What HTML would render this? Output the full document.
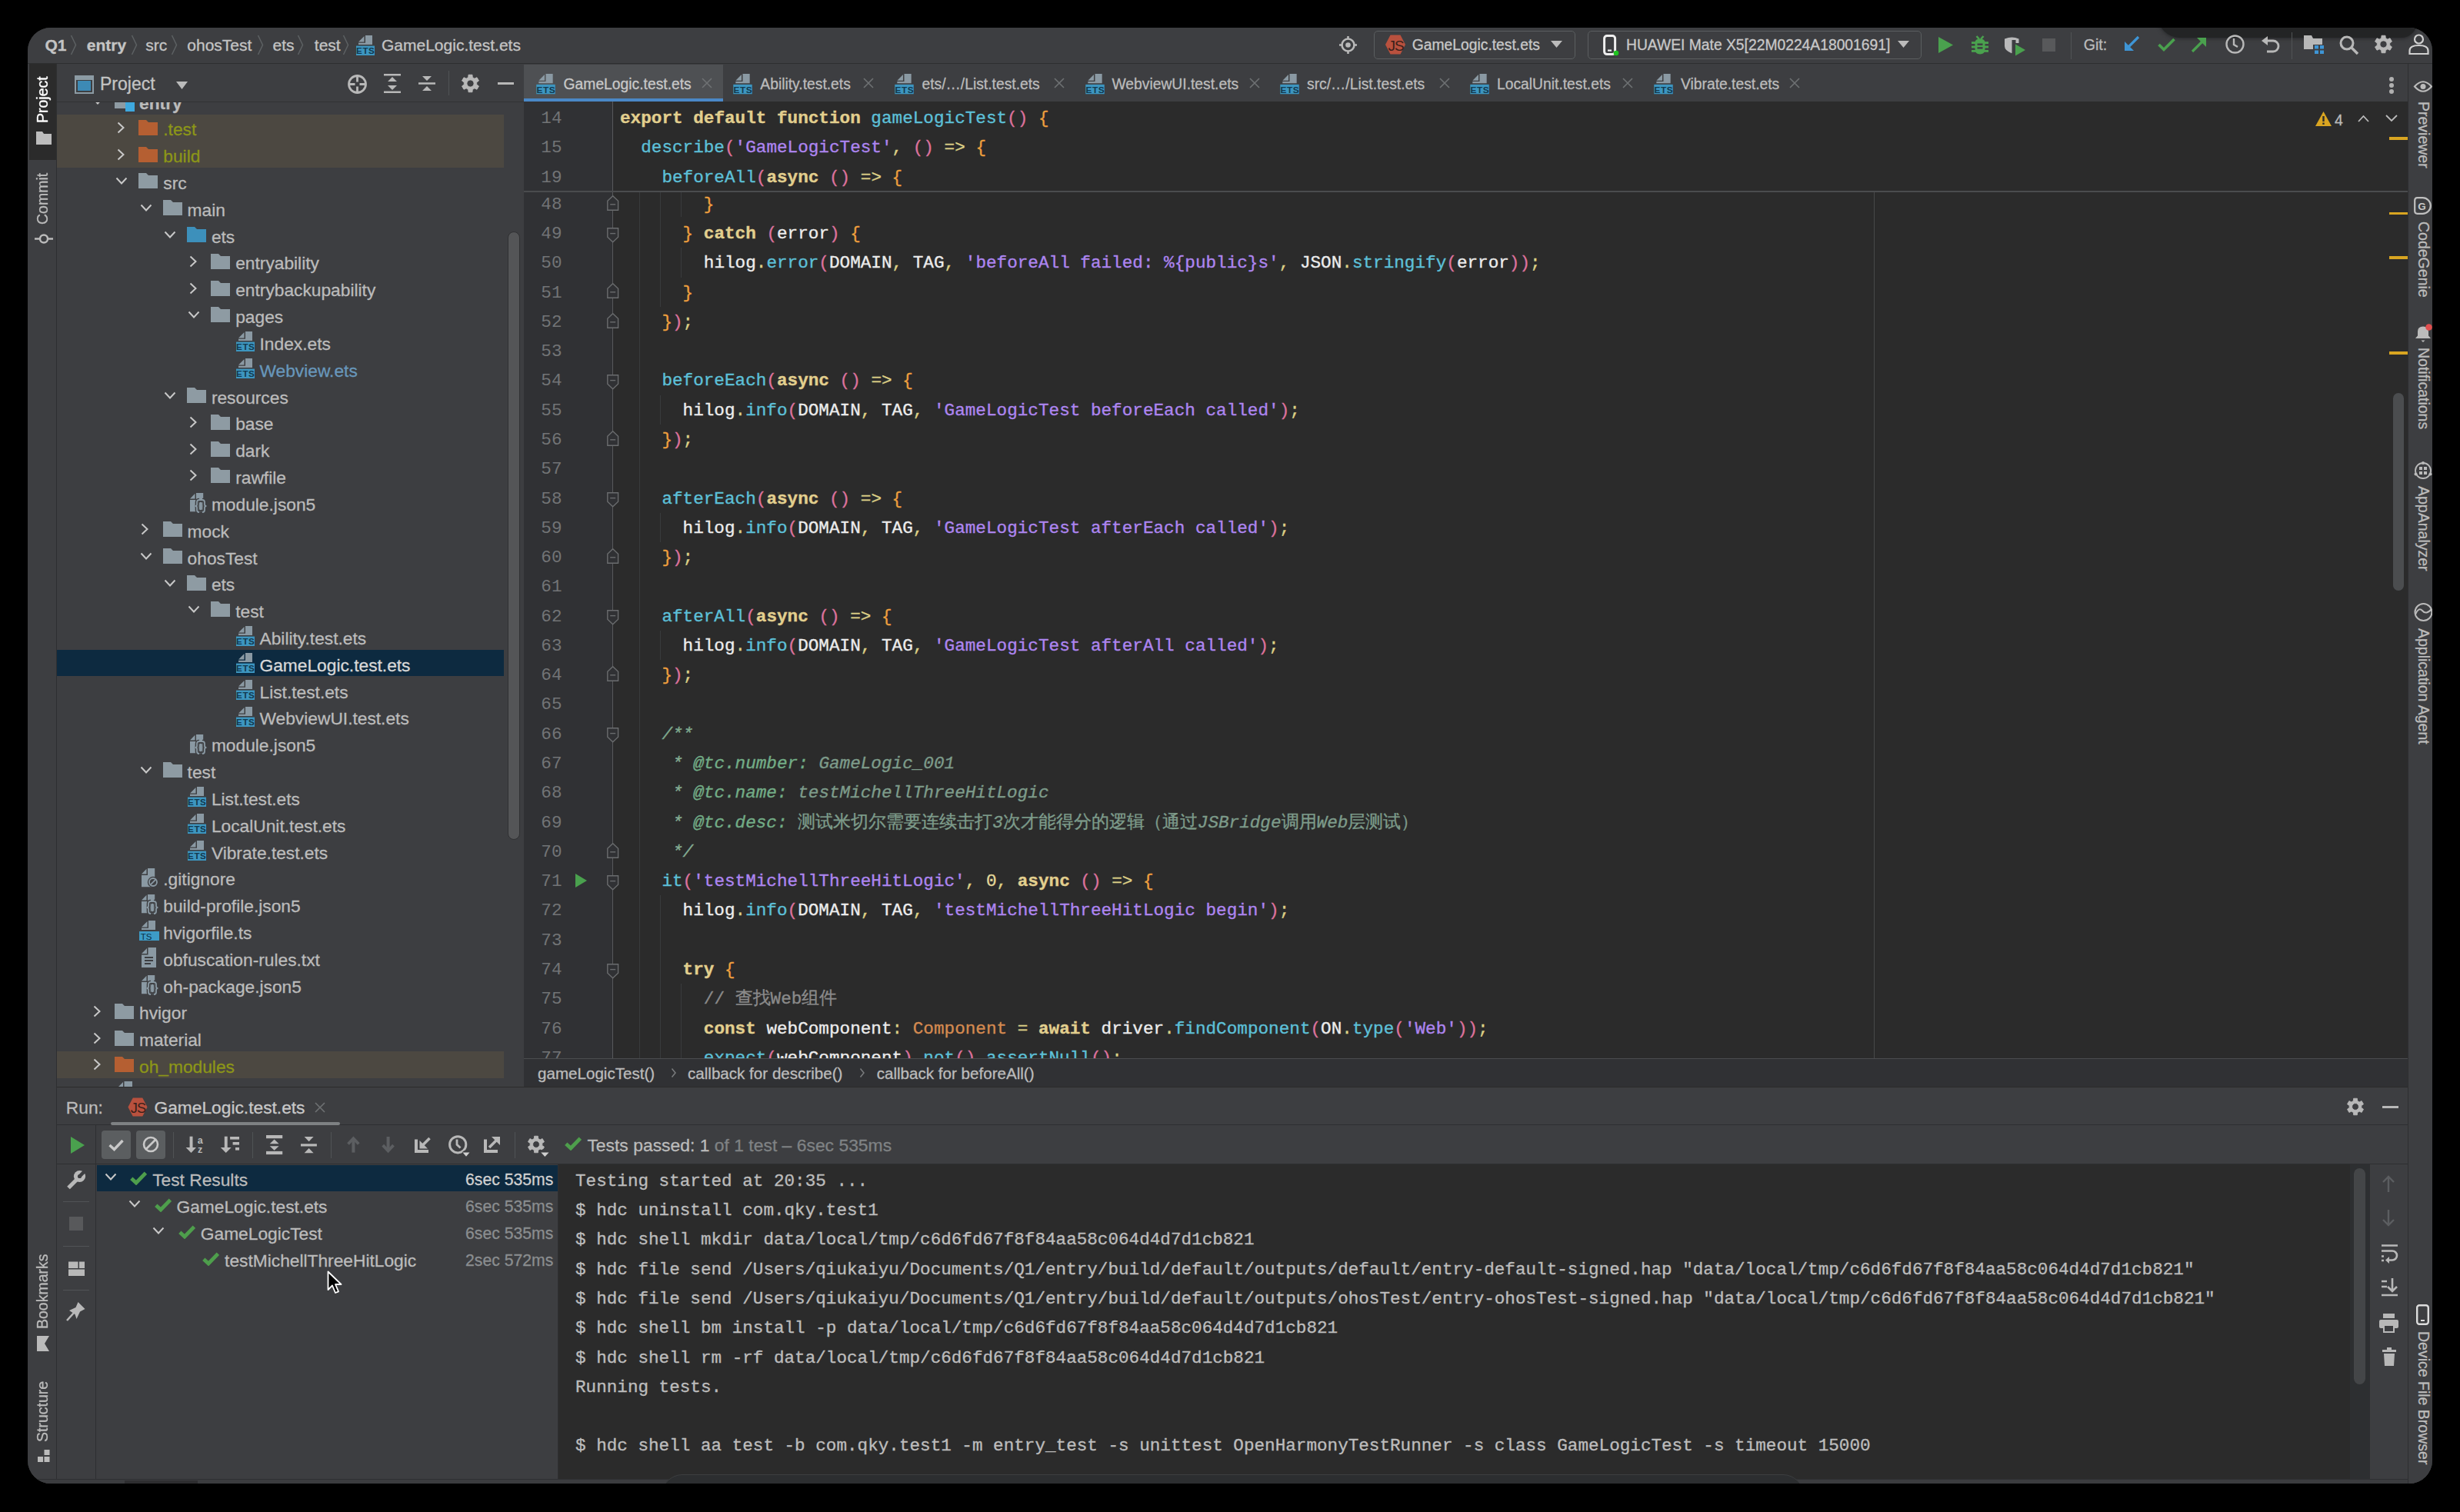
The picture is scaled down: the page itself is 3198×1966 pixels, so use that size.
<!DOCTYPE html><html><head><meta charset="utf-8"><style>
*{margin:0;padding:0;box-sizing:border-box}
html,body{width:3198px;height:1966px;background:#000;overflow:hidden}
#win{position:absolute;left:0;top:0;width:3198px;height:1966px;clip-path:inset(36px 36px 37px 36px round 30px);background:#3d3e41}
.a{position:absolute}
.t{position:absolute;white-space:pre;font-family:"Liberation Sans", sans-serif;color:#bbbbbb;-webkit-text-stroke:0.3px currentColor}
.m{position:absolute;white-space:pre;font-family:"Liberation Mono", monospace;font-size:22.667px;-webkit-text-stroke:0.35px currentColor}
.k{color:#e2cf8e;font-weight:bold}
.f{color:#5dc0d8}
.s{color:#ad85f0}
.p{color:#dc729c}
.b{color:#ee9f3e}
.i{color:#ececec}
.o{color:#dccf86}
.n{color:#e3d89a}
.ty{color:#d48a50}
.c{color:#8a8a8a}
.dk{color:#7fa98e;font-style:italic}
.ds{color:#84ac93;font-style:italic}
.dt{color:#72ac86;font-style:italic}
.dx{color:#7d9b8a;font-style:italic}
.dxc{color:#7d9b8a}
svg{position:absolute;overflow:visible}
</style></head><body><div id="win">
<svg width="0" height="0" style="position:absolute"><defs>
<symbol id="folder" viewBox="0 0 25 20"><path d="M0 0H10L13 3H25V20H0Z" fill="currentColor"/></symbol>
<symbol id="ets" viewBox="0 0 24 26"><path d="M3 8.6L10.5 1V8.6Z M12 0H21V12H3V9.8H12Z" fill="#8a99a3"/><rect x="0" y="13.6" width="24" height="12.4" fill="#3d96c0"/><text x="12.3" y="24.4" font-family="Liberation Sans" font-weight="bold" font-size="11.6" fill="#12394f" text-anchor="middle" letter-spacing="0.6">ETS</text></symbol>
<symbol id="json" viewBox="0 0 24 27"><path d="M1 8.5L7.5 1.8V8.5Z M9 1H18.2V25.2H1V10H9Z" fill="#8a99a3"/><path d="M13 10Q10 10 10 13V16Q10 18 7.6 18Q10 18 10 20V23Q10 26 13 26 M17 10Q20 10 20 13V16Q20 18 22.4 18Q20 18 20 20V23Q20 26 17 26" fill="none" stroke="#3d3e41" stroke-width="4.6"/><path d="M12.5 11H17.5V25H12.5Z" fill="#3d3e41"/><path d="M13 10Q10 10 10 13V16Q10 18 7.6 18Q10 18 10 20V23Q10 26 13 26 M17 10Q20 10 20 13V16Q20 18 22.4 18Q20 18 20 20V23Q20 26 17 26" fill="none" stroke="#8a99a3" stroke-width="1.8"/><rect x="13.1" y="12.8" width="3.8" height="10.4" rx="1.6" fill="#8a99a3"/></symbol>
<symbol id="gi" viewBox="0 0 24 27"><path d="M1 8.5L7.5 1.8V8.5Z M9 1H18.2V25.2H1V10H9Z" fill="#8a99a3"/><circle cx="16" cy="19" r="7.2" fill="#3d3e41"/><circle cx="16" cy="19" r="5" fill="none" stroke="#8a99a3" stroke-width="1.8"/><path d="M12.6 22.4L19.4 15.6" stroke="#8a99a3" stroke-width="1.8"/></symbol>
<symbol id="tsf" viewBox="0 0 26 26"><path d="M3 8.6L10.5 1V8.6Z M12 0H21V12H3V9.8H12Z" fill="#8a99a3"/><rect x="0" y="14" width="26" height="12" fill="#3d9bc6"/><text x="9" y="24.6" font-family="Liberation Sans" font-size="11.5" fill="#0b3148" text-anchor="middle">TS</text></symbol>
<symbol id="txt" viewBox="0 0 20 26"><path d="M0 8L7 1V8Z M8.5 0H19V26H0V9.5H8.5Z" fill="#8a99a3"/><path d="M4 13H15M4 17H15M4 21H12" stroke="#3d3e41" stroke-width="1.8"/></symbol>
<symbol id="chev" viewBox="0 0 10 16"><path d="M1.5 1.5L8.5 8L1.5 14.5" fill="none" stroke="#c8c8c8" stroke-width="2"/></symbol>
<symbol id="chevd" viewBox="0 0 16 10"><path d="M1.5 1.5L8 8.5L14.5 1.5" fill="none" stroke="#c8c8c8" stroke-width="2"/></symbol>
<symbol id="check" viewBox="0 0 22 18"><path d="M1.8 9.2L8 15L20.4 2.2" fill="none" stroke="#4e9e4c" stroke-width="4.8"/></symbol>
<symbol id="jsic" viewBox="0 0 28 28"><path d="M7.5 1.5H20.5L27 14L20.5 26.5H7.5L1 14Z" fill="#b9513e"/><text x="14.5" y="21.5" font-family="Liberation Sans" font-size="19" fill="#3a1f1a" text-anchor="middle" letter-spacing="-1">JS</text></symbol>
</defs></svg>
<div class="a" style="left:36px;top:36px;width:3126px;height:46px;background:#3d3e41;"></div>
<div class="a" style="left:36px;top:82px;width:3126px;height:1px;background:#2d2e30;"></div>
<div class="a" style="left:2805px;top:20px;width:337px;height:28.5px;background:#232425;border-radius:0 0 28px 40px;box-shadow:0 1px 5px #262729"></div>
<div class="t" style="left:58.50px;top:46.32px;font-size:21px;line-height:25.20px;color:#c4c4c4;font-weight:bold;">Q1</div>
<div class="t" style="left:112.80px;top:46.32px;font-size:21px;line-height:25.20px;color:#c4c4c4;font-weight:bold;">entry</div>
<div class="t" style="left:189.30px;top:46.32px;font-size:21px;line-height:25.20px;color:#c4c4c4;font-weight:normal;">src</div>
<div class="t" style="left:243.30px;top:46.32px;font-size:21px;line-height:25.20px;color:#c4c4c4;font-weight:normal;">ohosTest</div>
<div class="t" style="left:354.50px;top:46.32px;font-size:21px;line-height:25.20px;color:#c4c4c4;font-weight:normal;">ets</div>
<div class="t" style="left:408.80px;top:46.32px;font-size:21px;line-height:25.20px;color:#c4c4c4;font-weight:normal;">test</div>
<svg style="left:90.5px;top:45px" width="10" height="28"><path d="M1.5 1L7.5 13.5L1.5 26" fill="none" stroke="#5d6163" stroke-width="1.5"/></svg>
<svg style="left:170px;top:45px" width="10" height="28"><path d="M1.5 1L7.5 13.5L1.5 26" fill="none" stroke="#5d6163" stroke-width="1.5"/></svg>
<svg style="left:222px;top:45px" width="10" height="28"><path d="M1.5 1L7.5 13.5L1.5 26" fill="none" stroke="#5d6163" stroke-width="1.5"/></svg>
<svg style="left:334px;top:45px" width="10" height="28"><path d="M1.5 1L7.5 13.5L1.5 26" fill="none" stroke="#5d6163" stroke-width="1.5"/></svg>
<svg style="left:386px;top:45px" width="10" height="28"><path d="M1.5 1L7.5 13.5L1.5 26" fill="none" stroke="#5d6163" stroke-width="1.5"/></svg>
<svg style="left:445px;top:45px" width="10" height="28"><path d="M1.5 1L7.5 13.5L1.5 26" fill="none" stroke="#5d6163" stroke-width="1.5"/></svg>
<svg style="left:463.40px;top:45.50px;" width="24" height="26"><use href="#ets" width="24" height="26"/></svg>
<div class="t" style="left:496.00px;top:46.32px;font-size:21px;line-height:25.20px;color:#c4c4c4;font-weight:normal;">GameLogic.test.ets</div>
<div class="a" style="left:36px;top:83px;width:37px;height:1846px;background:#3d3e41;"></div>
<div class="a" style="left:73px;top:83px;width:1px;height:1846px;background:#2e2f31;"></div>
<div class="a" style="left:38px;top:83px;width:35px;height:125px;background:#2b2b2b;"></div>
<div class="t" style="left:44.30px;top:99px;width:23.40px;height:62px;font-size:19.5px;line-height:23.40px;writing-mode:vertical-rl;transform:rotate(180deg);text-align:center;color:#ffffff">Project</div>
<svg style="left:46.5px;top:170.8px" width="20" height="17"><path d="M0 0H8L10 3H20V17H0Z" fill="#bdbdbd"/></svg>
<div class="t" style="left:44.30px;top:224px;width:23.40px;height:69px;font-size:19.5px;line-height:23.40px;writing-mode:vertical-rl;transform:rotate(180deg);text-align:center;color:#bbbbbb">Commit</div>
<svg style="left:45px;top:302px" width="24" height="17"><circle cx="12" cy="8.5" r="5" fill="none" stroke="#bbbbbb" stroke-width="2.4"/><path d="M0 8.5H7M17 8.5H24" stroke="#bbbbbb" stroke-width="2.4"/></svg>
<div class="t" style="left:44.30px;top:1631px;width:23.40px;height:97px;font-size:19.5px;line-height:23.40px;writing-mode:vertical-rl;transform:rotate(180deg);text-align:center;color:#bbbbbb">Bookmarks</div>
<svg style="left:48px;top:1737px" width="16" height="20"><path d="M0 0H16L10 10L16 20H0Z" fill="#bbbbbb"/></svg>
<div class="t" style="left:44.30px;top:1794px;width:23.40px;height:82px;font-size:19.5px;line-height:23.40px;writing-mode:vertical-rl;transform:rotate(180deg);text-align:center;color:#bbbbbb">Structure</div>
<svg style="left:48.7px;top:1884.8px" width="16" height="16"><rect x="0" y="9" width="7" height="7" fill="#bbbbbb"/><rect x="8.5" y="9" width="7" height="7" fill="#bbbbbb"/><rect x="8.5" y="0" width="7" height="7" fill="#bbbbbb"/></svg>
<div class="a" style="left:74px;top:83px;width:607px;height:49px;background:#3d3e41;"></div>
<div class="a" style="left:74px;top:132px;width:607px;height:1px;background:#313234;"></div>
<svg style="left:97px;top:97.6px" width="25" height="24"><rect x="1" y="1" width="23" height="22" fill="none" stroke="#8c9ba4" stroke-width="2"/><rect x="1" y="1" width="23" height="5" fill="#8c9ba4"/><rect x="4" y="7" width="17" height="13" fill="#3d8ab5"/></svg>
<div class="t" style="left:130.00px;top:96.23px;font-size:23px;line-height:27.60px;color:#c4c4c4;font-weight:normal;">Project</div>
<svg style="left:229px;top:105.5px" width="15" height="10"><path d="M0 0H15L7.5 10Z" fill="#bbbbbb"/></svg>
<svg style="left:452px;top:96.5px" width="25" height="25"><circle cx="12.5" cy="12.5" r="11" fill="none" stroke="#b8b8b8" stroke-width="2.8"/><path d="M12.5 2V9.5M12.5 15.5V23M2 12.5H9.5M15.5 12.5H23" stroke="#b8b8b8" stroke-width="2.8"/></svg>
<svg style="left:498.5px;top:96px" width="22" height="25"><path d="M0 1.2H22M0 23.8H22" stroke="#b8b8b8" stroke-width="2.4"/><path d="M5 10L11 4L17 10Z M5 15L11 21L17 15Z" fill="#b8b8b8"/></svg>
<svg style="left:544px;top:96px" width="22" height="25"><path d="M0 12.5H22" stroke="#b8b8b8" stroke-width="2.4"/><path d="M5 3L11 9L17 3Z M5 22L11 16L17 22Z" fill="#b8b8b8"/></svg>
<div class="a" style="left:583px;top:92px;width:1px;height:32px;background:#505355;"></div>
<svg style="left:600px;top:97px" width="23" height="23" viewBox="0 0 24 24"><path d="M9.12 3.90L9.43 0.28L14.57 0.28L14.88 3.90L15.61 4.19L16.30 4.55L16.96 4.97L17.57 5.45L20.86 3.91L23.44 8.37L20.46 10.45L20.56 11.22L20.60 12.00L20.56 12.78L20.46 13.55L23.44 15.63L20.86 20.09L17.57 18.55L16.96 19.03L16.30 19.45L15.61 19.81L14.88 20.10L14.57 23.72L9.43 23.72L9.12 20.10L8.39 19.81L7.70 19.45L7.04 19.03L6.43 18.55L3.14 20.09L0.56 15.63L3.54 13.55L3.44 12.78L3.40 12.00L3.44 11.22L3.54 10.45L0.56 8.37L3.14 3.91L6.43 5.45L7.04 4.97L7.70 4.55L8.39 4.19Z M12 7.20A4.8 4.8 0 1 0 12 16.80A4.8 4.8 0 1 0 12 7.20Z" fill="#b8b8b8" fill-rule="evenodd" stroke="#b8b8b8" stroke-width="1" stroke-linejoin="round"/></svg>
<div class="a" style="left:647px;top:107px;width:21px;height:3px;background:#b8b8b8;"></div>
<div class="a" style="left:74px;top:133px;width:607px;height:1281px;overflow:hidden">
<svg style="left:45.00px;top:-7.11px;" width="16" height="10"><use href="#chevd" width="16" height="10"/></svg>
<svg style="left:75.00px;top:-12.11px;color:#8e9ba3;" width="25" height="20"><use href="#folder" width="25" height="20"/></svg>
<div class="a" style="left:89.0px;top:-0.11000000000001364px;width:12px;height:12px;background:#3ea8de;"></div>
<div class="t" style="left:107.00px;top:-12.44px;font-size:22.75px;line-height:27.30px;color:#bbbbbb;font-weight:bold;">entry</div>
<div class="a" style="left:0px;top:15.599999999999984px;width:581px;height:34.22px;background:#4c4841;"></div>
<svg style="left:78.00px;top:24.71px;" width="10" height="16"><use href="#chev" width="10" height="16"/></svg>
<svg style="left:106.30px;top:22.71px;color:#b55f32;" width="25" height="20"><use href="#folder" width="25" height="20"/></svg>
<div class="t" style="left:138.30px;top:22.38px;font-size:22.75px;line-height:27.30px;color:#8c9618;font-weight:normal;">.test</div>
<div class="a" style="left:0px;top:50.41999999999997px;width:581px;height:34.22px;background:#4c4841;"></div>
<svg style="left:78.00px;top:59.53px;" width="10" height="16"><use href="#chev" width="10" height="16"/></svg>
<svg style="left:106.30px;top:57.53px;color:#b55f32;" width="25" height="20"><use href="#folder" width="25" height="20"/></svg>
<div class="t" style="left:138.30px;top:57.20px;font-size:22.75px;line-height:27.30px;color:#8c9618;font-weight:normal;">build</div>
<svg style="left:76.30px;top:97.35px;" width="16" height="10"><use href="#chevd" width="16" height="10"/></svg>
<svg style="left:106.30px;top:92.35px;color:#8e9ba3;" width="25" height="20"><use href="#folder" width="25" height="20"/></svg>
<div class="t" style="left:138.30px;top:92.02px;font-size:22.75px;line-height:27.30px;color:#bbbbbb;font-weight:normal;">src</div>
<svg style="left:107.60px;top:132.17px;" width="16" height="10"><use href="#chevd" width="16" height="10"/></svg>
<svg style="left:137.60px;top:127.17px;color:#8e9ba3;" width="25" height="20"><use href="#folder" width="25" height="20"/></svg>
<div class="t" style="left:169.60px;top:126.84px;font-size:22.75px;line-height:27.30px;color:#bbbbbb;font-weight:normal;">main</div>
<svg style="left:138.90px;top:166.99px;" width="16" height="10"><use href="#chevd" width="16" height="10"/></svg>
<svg style="left:168.90px;top:161.99px;color:#3d90bb;" width="25" height="20"><use href="#folder" width="25" height="20"/></svg>
<div class="t" style="left:200.90px;top:161.66px;font-size:22.75px;line-height:27.30px;color:#bbbbbb;font-weight:normal;">ets</div>
<svg style="left:171.90px;top:198.81px;" width="10" height="16"><use href="#chev" width="10" height="16"/></svg>
<svg style="left:200.20px;top:196.81px;color:#8e9ba3;" width="25" height="20"><use href="#folder" width="25" height="20"/></svg>
<div class="t" style="left:232.20px;top:196.48px;font-size:22.75px;line-height:27.30px;color:#bbbbbb;font-weight:normal;">entryability</div>
<svg style="left:171.90px;top:233.63px;" width="10" height="16"><use href="#chev" width="10" height="16"/></svg>
<svg style="left:200.20px;top:231.63px;color:#8e9ba3;" width="25" height="20"><use href="#folder" width="25" height="20"/></svg>
<div class="t" style="left:232.20px;top:231.30px;font-size:22.75px;line-height:27.30px;color:#bbbbbb;font-weight:normal;">entrybackupability</div>
<svg style="left:170.20px;top:271.45px;" width="16" height="10"><use href="#chevd" width="16" height="10"/></svg>
<svg style="left:200.20px;top:266.45px;color:#8e9ba3;" width="25" height="20"><use href="#folder" width="25" height="20"/></svg>
<div class="t" style="left:232.20px;top:266.12px;font-size:22.75px;line-height:27.30px;color:#bbbbbb;font-weight:normal;">pages</div>
<svg style="left:232.50px;top:298.27px;" width="24" height="26"><use href="#ets" width="24" height="26"/></svg>
<div class="t" style="left:263.50px;top:300.94px;font-size:22.75px;line-height:27.30px;color:#bbbbbb;font-weight:normal;">Index.ets</div>
<svg style="left:232.50px;top:333.09px;" width="24" height="26"><use href="#ets" width="24" height="26"/></svg>
<div class="t" style="left:263.50px;top:335.76px;font-size:22.75px;line-height:27.30px;color:#6897bb;font-weight:normal;">Webview.ets</div>
<svg style="left:138.90px;top:375.91px;" width="16" height="10"><use href="#chevd" width="16" height="10"/></svg>
<svg style="left:168.90px;top:370.91px;color:#8e9ba3;" width="25" height="20"><use href="#folder" width="25" height="20"/></svg>
<div class="t" style="left:200.90px;top:370.58px;font-size:22.75px;line-height:27.30px;color:#bbbbbb;font-weight:normal;">resources</div>
<svg style="left:171.90px;top:407.73px;" width="10" height="16"><use href="#chev" width="10" height="16"/></svg>
<svg style="left:200.20px;top:405.73px;color:#8e9ba3;" width="25" height="20"><use href="#folder" width="25" height="20"/></svg>
<div class="t" style="left:232.20px;top:405.40px;font-size:22.75px;line-height:27.30px;color:#bbbbbb;font-weight:normal;">base</div>
<svg style="left:171.90px;top:442.55px;" width="10" height="16"><use href="#chev" width="10" height="16"/></svg>
<svg style="left:200.20px;top:440.55px;color:#8e9ba3;" width="25" height="20"><use href="#folder" width="25" height="20"/></svg>
<div class="t" style="left:232.20px;top:440.22px;font-size:22.75px;line-height:27.30px;color:#bbbbbb;font-weight:normal;">dark</div>
<svg style="left:171.90px;top:477.37px;" width="10" height="16"><use href="#chev" width="10" height="16"/></svg>
<svg style="left:200.20px;top:475.37px;color:#8e9ba3;" width="25" height="20"><use href="#folder" width="25" height="20"/></svg>
<div class="t" style="left:232.20px;top:475.04px;font-size:22.75px;line-height:27.30px;color:#bbbbbb;font-weight:normal;">rawfile</div>
<svg style="left:171.70px;top:507.19px;" width="24" height="27"><use href="#json" width="24" height="27"/></svg>
<div class="t" style="left:200.90px;top:509.86px;font-size:22.75px;line-height:27.30px;color:#bbbbbb;font-weight:normal;">module.json5</div>
<svg style="left:109.30px;top:547.01px;" width="10" height="16"><use href="#chev" width="10" height="16"/></svg>
<svg style="left:137.60px;top:545.01px;color:#8e9ba3;" width="25" height="20"><use href="#folder" width="25" height="20"/></svg>
<div class="t" style="left:169.60px;top:544.68px;font-size:22.75px;line-height:27.30px;color:#bbbbbb;font-weight:normal;">mock</div>
<svg style="left:107.60px;top:584.83px;" width="16" height="10"><use href="#chevd" width="16" height="10"/></svg>
<svg style="left:137.60px;top:579.83px;color:#8e9ba3;" width="25" height="20"><use href="#folder" width="25" height="20"/></svg>
<div class="t" style="left:169.60px;top:579.50px;font-size:22.75px;line-height:27.30px;color:#bbbbbb;font-weight:normal;">ohosTest</div>
<svg style="left:138.90px;top:619.65px;" width="16" height="10"><use href="#chevd" width="16" height="10"/></svg>
<svg style="left:168.90px;top:614.65px;color:#8e9ba3;" width="25" height="20"><use href="#folder" width="25" height="20"/></svg>
<div class="t" style="left:200.90px;top:614.32px;font-size:22.75px;line-height:27.30px;color:#bbbbbb;font-weight:normal;">ets</div>
<svg style="left:170.20px;top:654.47px;" width="16" height="10"><use href="#chevd" width="16" height="10"/></svg>
<svg style="left:200.20px;top:649.47px;color:#8e9ba3;" width="25" height="20"><use href="#folder" width="25" height="20"/></svg>
<div class="t" style="left:232.20px;top:649.14px;font-size:22.75px;line-height:27.30px;color:#bbbbbb;font-weight:normal;">test</div>
<svg style="left:232.50px;top:681.29px;" width="24" height="26"><use href="#ets" width="24" height="26"/></svg>
<div class="t" style="left:263.50px;top:683.96px;font-size:22.75px;line-height:27.30px;color:#bbbbbb;font-weight:normal;">Ability.test.ets</div>
<div class="a" style="left:0px;top:712.0px;width:581px;height:34.22px;background:#0d2a40;"></div>
<svg style="left:232.50px;top:716.11px;" width="24" height="26"><use href="#ets" width="24" height="26"/></svg>
<div class="t" style="left:263.50px;top:718.78px;font-size:22.75px;line-height:27.30px;color:#d8d8d8;font-weight:normal;">GameLogic.test.ets</div>
<svg style="left:232.50px;top:750.93px;" width="24" height="26"><use href="#ets" width="24" height="26"/></svg>
<div class="t" style="left:263.50px;top:753.60px;font-size:22.75px;line-height:27.30px;color:#bbbbbb;font-weight:normal;">List.test.ets</div>
<svg style="left:232.50px;top:785.75px;" width="24" height="26"><use href="#ets" width="24" height="26"/></svg>
<div class="t" style="left:263.50px;top:788.42px;font-size:22.75px;line-height:27.30px;color:#bbbbbb;font-weight:normal;">WebviewUI.test.ets</div>
<svg style="left:171.70px;top:820.57px;" width="24" height="27"><use href="#json" width="24" height="27"/></svg>
<div class="t" style="left:200.90px;top:823.24px;font-size:22.75px;line-height:27.30px;color:#bbbbbb;font-weight:normal;">module.json5</div>
<svg style="left:107.60px;top:863.39px;" width="16" height="10"><use href="#chevd" width="16" height="10"/></svg>
<svg style="left:137.60px;top:858.39px;color:#8e9ba3;" width="25" height="20"><use href="#folder" width="25" height="20"/></svg>
<div class="t" style="left:169.60px;top:858.06px;font-size:22.75px;line-height:27.30px;color:#bbbbbb;font-weight:normal;">test</div>
<svg style="left:169.90px;top:890.21px;" width="24" height="26"><use href="#ets" width="24" height="26"/></svg>
<div class="t" style="left:200.90px;top:892.88px;font-size:22.75px;line-height:27.30px;color:#bbbbbb;font-weight:normal;">List.test.ets</div>
<svg style="left:169.90px;top:925.03px;" width="24" height="26"><use href="#ets" width="24" height="26"/></svg>
<div class="t" style="left:200.90px;top:927.70px;font-size:22.75px;line-height:27.30px;color:#bbbbbb;font-weight:normal;">LocalUnit.test.ets</div>
<svg style="left:169.90px;top:959.85px;" width="24" height="26"><use href="#ets" width="24" height="26"/></svg>
<div class="t" style="left:200.90px;top:962.52px;font-size:22.75px;line-height:27.30px;color:#bbbbbb;font-weight:normal;">Vibrate.test.ets</div>
<svg style="left:109.10px;top:994.67px;" width="24" height="27"><use href="#gi" width="24" height="27"/></svg>
<div class="t" style="left:138.30px;top:997.34px;font-size:22.75px;line-height:27.30px;color:#bbbbbb;font-weight:normal;">.gitignore</div>
<svg style="left:109.10px;top:1029.49px;" width="24" height="27"><use href="#json" width="24" height="27"/></svg>
<div class="t" style="left:138.30px;top:1032.16px;font-size:22.75px;line-height:27.30px;color:#bbbbbb;font-weight:normal;">build-profile.json5</div>
<svg style="left:107.00px;top:1064.31px;" width="26" height="26"><use href="#tsf" width="26" height="26"/></svg>
<div class="t" style="left:138.30px;top:1066.98px;font-size:22.75px;line-height:27.30px;color:#bbbbbb;font-weight:normal;">hvigorfile.ts</div>
<svg style="left:109.80px;top:1099.13px;" width="20" height="26"><use href="#txt" width="20" height="26"/></svg>
<div class="t" style="left:138.30px;top:1101.80px;font-size:22.75px;line-height:27.30px;color:#bbbbbb;font-weight:normal;">obfuscation-rules.txt</div>
<svg style="left:109.10px;top:1133.95px;" width="24" height="27"><use href="#json" width="24" height="27"/></svg>
<div class="t" style="left:138.30px;top:1136.62px;font-size:22.75px;line-height:27.30px;color:#bbbbbb;font-weight:normal;">oh-package.json5</div>
<svg style="left:46.70px;top:1173.77px;" width="10" height="16"><use href="#chev" width="10" height="16"/></svg>
<svg style="left:75.00px;top:1171.77px;color:#8e9ba3;" width="25" height="20"><use href="#folder" width="25" height="20"/></svg>
<div class="t" style="left:107.00px;top:1171.44px;font-size:22.75px;line-height:27.30px;color:#bbbbbb;font-weight:normal;">hvigor</div>
<svg style="left:46.70px;top:1208.59px;" width="10" height="16"><use href="#chev" width="10" height="16"/></svg>
<svg style="left:75.00px;top:1206.59px;color:#8e9ba3;" width="25" height="20"><use href="#folder" width="25" height="20"/></svg>
<div class="t" style="left:107.00px;top:1206.26px;font-size:22.75px;line-height:27.30px;color:#bbbbbb;font-weight:normal;">material</div>
<div class="a" style="left:0px;top:1234.2999999999997px;width:581px;height:34.22px;background:#4c4841;"></div>
<svg style="left:46.70px;top:1243.41px;" width="10" height="16"><use href="#chev" width="10" height="16"/></svg>
<svg style="left:75.00px;top:1241.41px;color:#b55f32;" width="25" height="20"><use href="#folder" width="25" height="20"/></svg>
<div class="t" style="left:107.00px;top:1241.08px;font-size:22.75px;line-height:27.30px;color:#8c9618;font-weight:normal;">oh_modules</div>
<svg style="left:78.50px;top:1273.23px;" width="20" height="26"><use href="#txt" width="20" height="26"/></svg>
<div class="t" style="left:107.00px;top:1275.90px;font-size:22.75px;line-height:27.30px;color:#bbbbbb;font-weight:normal;"></div>
</div>
<div class="a" style="left:660px;top:300.5px;width:15.5px;height:791px;background:#545557;border:1px solid #303133;border-radius:8px"></div>
<div class="a" style="left:681px;top:83px;width:2450px;height:49px;background:#3d3e41;"></div>
<div class="a" style="left:681px;top:84px;width:259px;height:44px;background:#4e5053;"></div>
<div class="a" style="left:681px;top:128px;width:259px;height:4px;background:#4a88c7;"></div>
<svg style="left:697.20px;top:96.30px;" width="25" height="26.5"><use href="#ets" width="25" height="26.5"/></svg>
<div class="t" style="left:732.60px;top:98.33px;font-size:19.3px;line-height:23.16px;color:#c8c8c8;font-weight:normal;">GameLogic.test.ets</div>
<svg style="left:912px;top:101px" width="14" height="14"><path d="M1 1L13 13M13 1L1 13" stroke="#6e7173" stroke-width="1.6"/></svg>
<svg style="left:952.70px;top:96.30px;" width="25" height="26.5"><use href="#ets" width="25" height="26.5"/></svg>
<div class="t" style="left:988.30px;top:98.33px;font-size:19.3px;line-height:23.16px;color:#bbbbbb;font-weight:normal;">Ability.test.ets</div>
<svg style="left:1122.4px;top:101px" width="14" height="14"><path d="M1 1L13 13M13 1L1 13" stroke="#6e7173" stroke-width="1.6"/></svg>
<svg style="left:1163.40px;top:96.30px;" width="25" height="26.5"><use href="#ets" width="25" height="26.5"/></svg>
<div class="t" style="left:1198.50px;top:98.33px;font-size:19.3px;line-height:23.16px;color:#bbbbbb;font-weight:normal;">ets/…/List.test.ets</div>
<svg style="left:1370px;top:101px" width="14" height="14"><path d="M1 1L13 13M13 1L1 13" stroke="#6e7173" stroke-width="1.6"/></svg>
<svg style="left:1411.00px;top:96.30px;" width="25" height="26.5"><use href="#ets" width="25" height="26.5"/></svg>
<div class="t" style="left:1445.50px;top:98.33px;font-size:19.3px;line-height:23.16px;color:#bbbbbb;font-weight:normal;">WebviewUI.test.ets</div>
<svg style="left:1623.5px;top:101px" width="14" height="14"><path d="M1 1L13 13M13 1L1 13" stroke="#6e7173" stroke-width="1.6"/></svg>
<svg style="left:1664.00px;top:96.30px;" width="25" height="26.5"><use href="#ets" width="25" height="26.5"/></svg>
<div class="t" style="left:1699.00px;top:98.33px;font-size:19.3px;line-height:23.16px;color:#bbbbbb;font-weight:normal;">src/…/List.test.ets</div>
<svg style="left:1871px;top:101px" width="14" height="14"><path d="M1 1L13 13M13 1L1 13" stroke="#6e7173" stroke-width="1.6"/></svg>
<svg style="left:1911.00px;top:96.30px;" width="25" height="26.5"><use href="#ets" width="25" height="26.5"/></svg>
<div class="t" style="left:1946.00px;top:98.33px;font-size:19.3px;line-height:23.16px;color:#bbbbbb;font-weight:normal;">LocalUnit.test.ets</div>
<svg style="left:2109px;top:101px" width="14" height="14"><path d="M1 1L13 13M13 1L1 13" stroke="#6e7173" stroke-width="1.6"/></svg>
<svg style="left:2150.00px;top:96.30px;" width="25" height="26.5"><use href="#ets" width="25" height="26.5"/></svg>
<div class="t" style="left:2185.00px;top:98.33px;font-size:19.3px;line-height:23.16px;color:#bbbbbb;font-weight:normal;">Vibrate.test.ets</div>
<svg style="left:2326px;top:101px" width="14" height="14"><path d="M1 1L13 13M13 1L1 13" stroke="#6e7173" stroke-width="1.6"/></svg>
<div class="a" style="left:3106px;top:100px;width:6px;height:6px;border-radius:3px;background:#b0b0b0"></div>
<div class="a" style="left:3106px;top:108px;width:6px;height:6px;border-radius:3px;background:#b0b0b0"></div>
<div class="a" style="left:3106px;top:116px;width:6px;height:6px;border-radius:3px;background:#b0b0b0"></div>
<div class="a" style="left:681px;top:132px;width:2450px;height:1244px;background:#2b2b2b;"></div>
<div class="a" style="left:681px;top:132px;width:116px;height:1244px;background:#303134;"></div>
<div class="a" style="left:796px;top:132px;width:1.2px;height:1244px;background:#58595b;"></div>
<div class="a" style="left:2436px;top:249px;width:1.2px;height:1127px;background:#474849;"></div>
<div class="a" style="left:831px;top:249px;width:1px;height:1127px;background:#393b3d;"></div>
<div class="a" style="left:858px;top:249px;width:1px;height:149.96249999999998px;background:#393b3d;"></div>
<div class="a" style="left:884.5px;top:249px;width:1px;height:33.13749999999999px;background:#393b3d;"></div>
<div class="a" style="left:884.5px;top:322.4125px;width:1px;height:38.27499999999998px;background:#393b3d;"></div>
<div class="a" style="left:858px;top:513.7874999999999px;width:1px;height:38.27500000000009px;background:#393b3d;"></div>
<div class="a" style="left:858px;top:666.8874999999999px;width:1px;height:38.27500000000009px;background:#393b3d;"></div>
<div class="a" style="left:858px;top:819.9875px;width:1px;height:38.27500000000009px;background:#393b3d;"></div>
<div class="a" style="left:858px;top:1164.4624999999999px;width:1px;height:211.53750000000014px;background:#393b3d;"></div>
<div class="a" style="left:884.5px;top:1279.2875px;width:1px;height:96.71250000000009px;background:#393b3d;"></div>
<svg style="left:788.6px;top:253.50px" width="16" height="20"><path d="M0.8 7.2L7.7 0.8L14.6 7.2V19.2H0.8Z" fill="#303134" stroke="#6a6c6e" stroke-width="1.4"/><path d="M4.2 11.8H11.2" stroke="#6a6c6e" stroke-width="1.4"/></svg>
<svg style="left:788.6px;top:295.77px" width="16" height="20"><path d="M0.8 0.8H14.6V12.3L7.7 18.7L0.8 12.3Z" fill="#303134" stroke="#6a6c6e" stroke-width="1.4"/><path d="M4.2 7.6H11.2" stroke="#6a6c6e" stroke-width="1.4"/></svg>
<svg style="left:788.6px;top:368.32px" width="16" height="20"><path d="M0.8 7.2L7.7 0.8L14.6 7.2V19.2H0.8Z" fill="#303134" stroke="#6a6c6e" stroke-width="1.4"/><path d="M4.2 11.8H11.2" stroke="#6a6c6e" stroke-width="1.4"/></svg>
<svg style="left:788.6px;top:406.60px" width="16" height="20"><path d="M0.8 7.2L7.7 0.8L14.6 7.2V19.2H0.8Z" fill="#303134" stroke="#6a6c6e" stroke-width="1.4"/><path d="M4.2 11.8H11.2" stroke="#6a6c6e" stroke-width="1.4"/></svg>
<svg style="left:788.6px;top:487.15px" width="16" height="20"><path d="M0.8 0.8H14.6V12.3L7.7 18.7L0.8 12.3Z" fill="#303134" stroke="#6a6c6e" stroke-width="1.4"/><path d="M4.2 7.6H11.2" stroke="#6a6c6e" stroke-width="1.4"/></svg>
<svg style="left:788.6px;top:559.70px" width="16" height="20"><path d="M0.8 7.2L7.7 0.8L14.6 7.2V19.2H0.8Z" fill="#303134" stroke="#6a6c6e" stroke-width="1.4"/><path d="M4.2 11.8H11.2" stroke="#6a6c6e" stroke-width="1.4"/></svg>
<svg style="left:788.6px;top:640.25px" width="16" height="20"><path d="M0.8 0.8H14.6V12.3L7.7 18.7L0.8 12.3Z" fill="#303134" stroke="#6a6c6e" stroke-width="1.4"/><path d="M4.2 7.6H11.2" stroke="#6a6c6e" stroke-width="1.4"/></svg>
<svg style="left:788.6px;top:712.80px" width="16" height="20"><path d="M0.8 7.2L7.7 0.8L14.6 7.2V19.2H0.8Z" fill="#303134" stroke="#6a6c6e" stroke-width="1.4"/><path d="M4.2 11.8H11.2" stroke="#6a6c6e" stroke-width="1.4"/></svg>
<svg style="left:788.6px;top:793.35px" width="16" height="20"><path d="M0.8 0.8H14.6V12.3L7.7 18.7L0.8 12.3Z" fill="#303134" stroke="#6a6c6e" stroke-width="1.4"/><path d="M4.2 7.6H11.2" stroke="#6a6c6e" stroke-width="1.4"/></svg>
<svg style="left:788.6px;top:865.90px" width="16" height="20"><path d="M0.8 7.2L7.7 0.8L14.6 7.2V19.2H0.8Z" fill="#303134" stroke="#6a6c6e" stroke-width="1.4"/><path d="M4.2 11.8H11.2" stroke="#6a6c6e" stroke-width="1.4"/></svg>
<svg style="left:788.6px;top:946.45px" width="16" height="20"><path d="M0.8 0.8H14.6V12.3L7.7 18.7L0.8 12.3Z" fill="#303134" stroke="#6a6c6e" stroke-width="1.4"/><path d="M4.2 7.6H11.2" stroke="#6a6c6e" stroke-width="1.4"/></svg>
<svg style="left:788.6px;top:1095.55px" width="16" height="20"><path d="M0.8 7.2L7.7 0.8L14.6 7.2V19.2H0.8Z" fill="#303134" stroke="#6a6c6e" stroke-width="1.4"/><path d="M4.2 11.8H11.2" stroke="#6a6c6e" stroke-width="1.4"/></svg>
<svg style="left:788.6px;top:1137.82px" width="16" height="20"><path d="M0.8 0.8H14.6V12.3L7.7 18.7L0.8 12.3Z" fill="#303134" stroke="#6a6c6e" stroke-width="1.4"/><path d="M4.2 7.6H11.2" stroke="#6a6c6e" stroke-width="1.4"/></svg>
<svg style="left:788.6px;top:1252.65px" width="16" height="20"><path d="M0.8 0.8H14.6V12.3L7.7 18.7L0.8 12.3Z" fill="#303134" stroke="#6a6c6e" stroke-width="1.4"/><path d="M4.2 7.6H11.2" stroke="#6a6c6e" stroke-width="1.4"/></svg>
<svg style="left:748px;top:1136.32px" width="16" height="18"><path d="M0 0L15 9L0 18Z" fill="#4aa14e"/></svg>
<div class="a" style="left:681px;top:249px;width:2450px;height:1127px;overflow:hidden">
<div class="m" style="left:125.0px;top:-2.19px;line-height:38px;color:#e0e0e0">        <span class="b">}</span></div>
<div class="m" style="left:8.70px;top:-2.19px;width:40.80px;text-align:right;line-height:38px;color:#727476;-webkit-text-stroke:0px">48</div>
<div class="m" style="left:125.0px;top:36.09px;line-height:38px;color:#e0e0e0">      <span class="b">}</span> <span class="k">catch</span> <span class="p">(</span><span class="i">error</span><span class="p">)</span> <span class="b">{</span></div>
<div class="m" style="left:8.70px;top:36.09px;width:40.80px;text-align:right;line-height:38px;color:#727476;-webkit-text-stroke:0px">49</div>
<div class="m" style="left:125.0px;top:74.37px;line-height:38px;color:#e0e0e0">        <span class="i">hilog</span><span class="o">.</span><span class="f">error</span><span class="p">(</span><span class="i">DOMAIN</span><span class="o">,</span> <span class="i">TAG</span><span class="o">,</span> <span class="s">'beforeAll failed: %{public}s'</span><span class="o">,</span> <span class="i">JSON</span><span class="o">.</span><span class="f">stringify</span><span class="p">(</span><span class="i">error</span><span class="p">))</span><span class="o">;</span></div>
<div class="m" style="left:8.70px;top:74.37px;width:40.80px;text-align:right;line-height:38px;color:#727476;-webkit-text-stroke:0px">50</div>
<div class="m" style="left:125.0px;top:112.64px;line-height:38px;color:#e0e0e0">      <span class="b">}</span></div>
<div class="m" style="left:8.70px;top:112.64px;width:40.80px;text-align:right;line-height:38px;color:#727476;-webkit-text-stroke:0px">51</div>
<div class="m" style="left:125.0px;top:150.92px;line-height:38px;color:#e0e0e0">    <span class="b">}</span><span class="p">)</span><span class="o">;</span></div>
<div class="m" style="left:8.70px;top:150.92px;width:40.80px;text-align:right;line-height:38px;color:#727476;-webkit-text-stroke:0px">52</div>
<div class="m" style="left:125.0px;top:189.19px;line-height:38px;color:#e0e0e0"></div>
<div class="m" style="left:8.70px;top:189.19px;width:40.80px;text-align:right;line-height:38px;color:#727476;-webkit-text-stroke:0px">53</div>
<div class="m" style="left:125.0px;top:227.46px;line-height:38px;color:#e0e0e0">    <span class="f">beforeEach</span><span class="p">(</span><span class="k">async</span> <span class="p">()</span> <span class="o">=&gt;</span> <span class="b">{</span></div>
<div class="m" style="left:8.70px;top:227.46px;width:40.80px;text-align:right;line-height:38px;color:#727476;-webkit-text-stroke:0px">54</div>
<div class="m" style="left:125.0px;top:265.74px;line-height:38px;color:#e0e0e0">      <span class="i">hilog</span><span class="o">.</span><span class="f">info</span><span class="p">(</span><span class="i">DOMAIN</span><span class="o">,</span> <span class="i">TAG</span><span class="o">,</span> <span class="s">'GameLogicTest beforeEach called'</span><span class="p">)</span><span class="o">;</span></div>
<div class="m" style="left:8.70px;top:265.74px;width:40.80px;text-align:right;line-height:38px;color:#727476;-webkit-text-stroke:0px">55</div>
<div class="m" style="left:125.0px;top:304.02px;line-height:38px;color:#e0e0e0">    <span class="b">}</span><span class="p">)</span><span class="o">;</span></div>
<div class="m" style="left:8.70px;top:304.02px;width:40.80px;text-align:right;line-height:38px;color:#727476;-webkit-text-stroke:0px">56</div>
<div class="m" style="left:125.0px;top:342.29px;line-height:38px;color:#e0e0e0"></div>
<div class="m" style="left:8.70px;top:342.29px;width:40.80px;text-align:right;line-height:38px;color:#727476;-webkit-text-stroke:0px">57</div>
<div class="m" style="left:125.0px;top:380.57px;line-height:38px;color:#e0e0e0">    <span class="f">afterEach</span><span class="p">(</span><span class="k">async</span> <span class="p">()</span> <span class="o">=&gt;</span> <span class="b">{</span></div>
<div class="m" style="left:8.70px;top:380.57px;width:40.80px;text-align:right;line-height:38px;color:#727476;-webkit-text-stroke:0px">58</div>
<div class="m" style="left:125.0px;top:418.84px;line-height:38px;color:#e0e0e0">      <span class="i">hilog</span><span class="o">.</span><span class="f">info</span><span class="p">(</span><span class="i">DOMAIN</span><span class="o">,</span> <span class="i">TAG</span><span class="o">,</span> <span class="s">'GameLogicTest afterEach called'</span><span class="p">)</span><span class="o">;</span></div>
<div class="m" style="left:8.70px;top:418.84px;width:40.80px;text-align:right;line-height:38px;color:#727476;-webkit-text-stroke:0px">59</div>
<div class="m" style="left:125.0px;top:457.12px;line-height:38px;color:#e0e0e0">    <span class="b">}</span><span class="p">)</span><span class="o">;</span></div>
<div class="m" style="left:8.70px;top:457.12px;width:40.80px;text-align:right;line-height:38px;color:#727476;-webkit-text-stroke:0px">60</div>
<div class="m" style="left:125.0px;top:495.39px;line-height:38px;color:#e0e0e0"></div>
<div class="m" style="left:8.70px;top:495.39px;width:40.80px;text-align:right;line-height:38px;color:#727476;-webkit-text-stroke:0px">61</div>
<div class="m" style="left:125.0px;top:533.67px;line-height:38px;color:#e0e0e0">    <span class="f">afterAll</span><span class="p">(</span><span class="k">async</span> <span class="p">()</span> <span class="o">=&gt;</span> <span class="b">{</span></div>
<div class="m" style="left:8.70px;top:533.67px;width:40.80px;text-align:right;line-height:38px;color:#727476;-webkit-text-stroke:0px">62</div>
<div class="m" style="left:125.0px;top:571.94px;line-height:38px;color:#e0e0e0">      <span class="i">hilog</span><span class="o">.</span><span class="f">info</span><span class="p">(</span><span class="i">DOMAIN</span><span class="o">,</span> <span class="i">TAG</span><span class="o">,</span> <span class="s">'GameLogicTest afterAll called'</span><span class="p">)</span><span class="o">;</span></div>
<div class="m" style="left:8.70px;top:571.94px;width:40.80px;text-align:right;line-height:38px;color:#727476;-webkit-text-stroke:0px">63</div>
<div class="m" style="left:125.0px;top:610.22px;line-height:38px;color:#e0e0e0">    <span class="b">}</span><span class="p">)</span><span class="o">;</span></div>
<div class="m" style="left:8.70px;top:610.22px;width:40.80px;text-align:right;line-height:38px;color:#727476;-webkit-text-stroke:0px">64</div>
<div class="m" style="left:125.0px;top:648.49px;line-height:38px;color:#e0e0e0"></div>
<div class="m" style="left:8.70px;top:648.49px;width:40.80px;text-align:right;line-height:38px;color:#727476;-webkit-text-stroke:0px">65</div>
<div class="m" style="left:125.0px;top:686.76px;line-height:38px;color:#e0e0e0">    <span class="dk">/**</span></div>
<div class="m" style="left:8.70px;top:686.76px;width:40.80px;text-align:right;line-height:38px;color:#727476;-webkit-text-stroke:0px">66</div>
<div class="m" style="left:125.0px;top:725.04px;line-height:38px;color:#e0e0e0">     <span class="ds">*</span> <span class="dt">@tc.number:</span> <span class="dx">GameLogic_001</span></div>
<div class="m" style="left:8.70px;top:725.04px;width:40.80px;text-align:right;line-height:38px;color:#727476;-webkit-text-stroke:0px">67</div>
<div class="m" style="left:125.0px;top:763.31px;line-height:38px;color:#e0e0e0">     <span class="ds">*</span> <span class="dt">@tc.name:</span> <span class="dx">testMichellThreeHitLogic</span></div>
<div class="m" style="left:8.70px;top:763.31px;width:40.80px;text-align:right;line-height:38px;color:#727476;-webkit-text-stroke:0px">68</div>
<div class="m" style="left:125.0px;top:801.59px;line-height:38px;color:#e0e0e0">     <span class="ds">*</span> <span class="dt">@tc.desc:</span> <span class="dxc">测试米切尔需要连续击打</span><span class="dx">3</span><span class="dxc">次才能得分的逻辑（通过</span><span class="dx">JSBridge</span><span class="dxc">调用</span><span class="dx">Web</span><span class="dxc">层测试）</span></div>
<div class="m" style="left:8.70px;top:801.59px;width:40.80px;text-align:right;line-height:38px;color:#727476;-webkit-text-stroke:0px">69</div>
<div class="m" style="left:125.0px;top:839.87px;line-height:38px;color:#e0e0e0">     <span class="ds">*/</span></div>
<div class="m" style="left:8.70px;top:839.87px;width:40.80px;text-align:right;line-height:38px;color:#727476;-webkit-text-stroke:0px">70</div>
<div class="m" style="left:125.0px;top:878.14px;line-height:38px;color:#e0e0e0">    <span class="f">it</span><span class="p">(</span><span class="s">'testMichellThreeHitLogic'</span><span class="o">,</span> <span class="n">0</span><span class="o">,</span> <span class="k">async</span> <span class="p">()</span> <span class="o">=&gt;</span> <span class="b">{</span></div>
<div class="m" style="left:8.70px;top:878.14px;width:40.80px;text-align:right;line-height:38px;color:#727476;-webkit-text-stroke:0px">71</div>
<div class="m" style="left:125.0px;top:916.41px;line-height:38px;color:#e0e0e0">      <span class="i">hilog</span><span class="o">.</span><span class="f">info</span><span class="p">(</span><span class="i">DOMAIN</span><span class="o">,</span> <span class="i">TAG</span><span class="o">,</span> <span class="s">'testMichellThreeHitLogic begin'</span><span class="p">)</span><span class="o">;</span></div>
<div class="m" style="left:8.70px;top:916.41px;width:40.80px;text-align:right;line-height:38px;color:#727476;-webkit-text-stroke:0px">72</div>
<div class="m" style="left:125.0px;top:954.69px;line-height:38px;color:#e0e0e0"></div>
<div class="m" style="left:8.70px;top:954.69px;width:40.80px;text-align:right;line-height:38px;color:#727476;-webkit-text-stroke:0px">73</div>
<div class="m" style="left:125.0px;top:992.97px;line-height:38px;color:#e0e0e0">      <span class="k">try</span> <span class="b">{</span></div>
<div class="m" style="left:8.70px;top:992.97px;width:40.80px;text-align:right;line-height:38px;color:#727476;-webkit-text-stroke:0px">74</div>
<div class="m" style="left:125.0px;top:1031.24px;line-height:38px;color:#e0e0e0">        <span class="c">// 查找Web组件</span></div>
<div class="m" style="left:8.70px;top:1031.24px;width:40.80px;text-align:right;line-height:38px;color:#727476;-webkit-text-stroke:0px">75</div>
<div class="m" style="left:125.0px;top:1069.52px;line-height:38px;color:#e0e0e0">        <span class="k">const</span> <span class="i">webComponent</span><span class="o">:</span> <span class="ty">Component</span> <span class="o">=</span> <span class="k">await</span> <span class="i">driver</span><span class="o">.</span><span class="f">findComponent</span><span class="p">(</span><span class="i">ON</span><span class="o">.</span><span class="f">type</span><span class="p">(</span><span class="s">'Web'</span><span class="p">))</span><span class="o">;</span></div>
<div class="m" style="left:8.70px;top:1069.52px;width:40.80px;text-align:right;line-height:38px;color:#727476;-webkit-text-stroke:0px">76</div>
<div class="m" style="left:125.0px;top:1107.79px;line-height:38px;color:#e0e0e0">        <span class="f">expect</span><span class="p">(</span><span class="i">webComponent</span><span class="p">)</span><span class="o">.</span><span class="f">not</span><span class="p">()</span><span class="o">.</span><span class="f">assertNull</span><span class="p">()</span><span class="o">;</span></div>
<div class="m" style="left:8.70px;top:1107.79px;width:40.80px;text-align:right;line-height:38px;color:#727476;-webkit-text-stroke:0px">77</div>
</div>
<div class="a" style="left:681px;top:132px;width:2450px;height:117px;background:#2b2b2b;"></div>
<div class="a" style="left:681px;top:132px;width:116px;height:117px;background:#303134;"></div>
<div class="a" style="left:796px;top:132px;width:1.2px;height:117px;background:#58595b;"></div>
<div class="m" style="left:806.0px;top:135.22px;line-height:38px;color:#e0e0e0"><span class="k">export</span> <span class="k">default</span> <span class="k">function</span> <span class="f">gameLogicTest</span><span class="p">()</span> <span class="b">{</span></div>
<div class="m" style="left:689.70px;top:135.22px;width:40.80px;text-align:right;line-height:38px;color:#727476;-webkit-text-stroke:0px">14</div>
<div class="m" style="left:806.0px;top:173.41px;line-height:38px;color:#e0e0e0">  <span class="f">describe</span><span class="p">(</span><span class="s">'GameLogicTest'</span><span class="o">,</span> <span class="p">()</span> <span class="o">=&gt;</span> <span class="b">{</span></div>
<div class="m" style="left:689.70px;top:173.41px;width:40.80px;text-align:right;line-height:38px;color:#727476;-webkit-text-stroke:0px">15</div>
<div class="m" style="left:806.0px;top:211.62px;line-height:38px;color:#e0e0e0">    <span class="f">beforeAll</span><span class="p">(</span><span class="k">async</span> <span class="p">()</span> <span class="o">=&gt;</span> <span class="b">{</span></div>
<div class="m" style="left:689.70px;top:211.62px;width:40.80px;text-align:right;line-height:38px;color:#727476;-webkit-text-stroke:0px">19</div>
<div class="a" style="left:681px;top:248px;width:2450px;height:2px;background:#4a4c4e;"></div>
<svg style="left:3010px;top:145px" width="21" height="19"><path d="M10.5 0L21 19H0Z" fill="#d9a521"/><rect x="9.3" y="6" width="2.4" height="7" fill="#2b2b2b"/><rect x="9.3" y="14.5" width="2.4" height="2.4" fill="#2b2b2b"/></svg>
<div class="t" style="left:3035.00px;top:145.04px;font-size:19.5px;line-height:23.40px;color:#bbbbbb;font-weight:normal;">4</div>
<svg style="left:3065px;top:149px" width="15" height="10"><path d="M1 9L7.5 2L14 9" fill="none" stroke="#bbbbbb" stroke-width="1.8"/></svg>
<svg style="left:3101px;top:149px" width="16" height="10"><path d="M1 1L8 8L15 1" fill="none" stroke="#bbbbbb" stroke-width="1.8"/></svg>
<div class="a" style="left:3106px;top:178.3px;width:24px;height:3.5px;background:#d9a521;"></div>
<div class="a" style="left:3106px;top:275.7px;width:24px;height:3.5px;background:#d9a521;"></div>
<div class="a" style="left:3106px;top:333.1px;width:24px;height:3.5px;background:#d9a521;"></div>
<div class="a" style="left:3106px;top:457.0px;width:24px;height:3.5px;background:#d9a521;"></div>
<div class="a" style="left:3111px;top:511px;width:14px;height:257px;background:#4b4d4f;border-radius:7px"></div>
<div class="a" style="left:681px;top:1376px;width:2450px;height:1px;background:#4b4d4f;"></div>
<div class="a" style="left:681px;top:1377px;width:2450px;height:37px;background:#303134;"></div>
<div class="t" style="left:699.00px;top:1383.50px;font-size:20.6px;line-height:24.72px;color:#bbbbbb;font-weight:normal;">gameLogicTest()</div>
<div class="t" style="left:894.00px;top:1383.50px;font-size:20.6px;line-height:24.72px;color:#bbbbbb;font-weight:normal;">callback for describe()</div>
<div class="t" style="left:1139.70px;top:1383.50px;font-size:20.6px;line-height:24.72px;color:#bbbbbb;font-weight:normal;">callback for beforeAll()</div>
<svg style="left:871.5px;top:1388px" width="8" height="14"><path d="M1.5 1.5L6 7L1.5 12.5" fill="none" stroke="#7a7c7e" stroke-width="1.5"/></svg>
<svg style="left:1117px;top:1388px" width="8" height="14"><path d="M1.5 1.5L6 7L1.5 12.5" fill="none" stroke="#7a7c7e" stroke-width="1.5"/></svg>
<div class="a" style="left:74px;top:1413px;width:3057px;height:1px;background:#2b2b2b;"></div>
<div class="a" style="left:74px;top:1414px;width:3057px;height:49px;background:#3d3e41;"></div>
<div class="a" style="left:74px;top:1462px;width:3057px;height:1px;background:#2e2f31;"></div>
<div class="t" style="left:85.80px;top:1427.47px;font-size:22.75px;line-height:27.30px;color:#bbbbbb;font-weight:normal;">Run:</div>
<svg style="left:165.00px;top:1426.00px;" width="28" height="27"><use href="#jsic" width="28" height="27"/></svg>
<div class="t" style="left:200.50px;top:1427.47px;font-size:22.75px;line-height:27.30px;color:#c8c8c8;font-weight:normal;">GameLogic.test.ets</div>
<svg style="left:409px;top:1433px" width="14" height="14"><path d="M1 1L13 13M13 1L1 13" stroke="#6e7173" stroke-width="1.6"/></svg>
<div class="a" style="left:144px;top:1459px;width:298px;height:4px;background:#7e8183;border-radius:2px"></div>
<svg style="left:3051px;top:1428px" width="22" height="22" viewBox="0 0 24 24"><path d="M9.12 3.90L9.43 0.28L14.57 0.28L14.88 3.90L15.61 4.19L16.30 4.55L16.96 4.97L17.57 5.45L20.86 3.91L23.44 8.37L20.46 10.45L20.56 11.22L20.60 12.00L20.56 12.78L20.46 13.55L23.44 15.63L20.86 20.09L17.57 18.55L16.96 19.03L16.30 19.45L15.61 19.81L14.88 20.10L14.57 23.72L9.43 23.72L9.12 20.10L8.39 19.81L7.70 19.45L7.04 19.03L6.43 18.55L3.14 20.09L0.56 15.63L3.54 13.55L3.44 12.78L3.40 12.00L3.44 11.22L3.54 10.45L0.56 8.37L3.14 3.91L6.43 5.45L7.04 4.97L7.70 4.55L8.39 4.19Z M12 7.20A4.8 4.8 0 1 0 12 16.80A4.8 4.8 0 1 0 12 7.20Z" fill="#b8b8b8" fill-rule="evenodd" stroke="#b8b8b8" stroke-width="1" stroke-linejoin="round"/></svg>
<div class="a" style="left:3096.5px;top:1438px;width:21px;height:3px;background:#b8b8b8;"></div>
<div class="a" style="left:74px;top:1463px;width:3057px;height:50px;background:#3d3e41;"></div>
<div class="a" style="left:124px;top:1463px;width:1px;height:466px;background:#2e2f31;"></div>
<div class="a" style="left:74px;top:1513px;width:3057px;height:1px;background:#2e2f31;"></div>
<svg style="left:91.5px;top:1478px" width="18" height="22"><path d="M0 0L18 11L0 22Z" fill="#4aa14e"/></svg>
<div class="a" style="left:132px;top:1470px;width:38px;height:37px;background:#5b5e60;border-radius:4px"></div>
<div class="a" style="left:177.4px;top:1470px;width:38px;height:37px;background:#5b5e60;border-radius:4px"></div>
<svg style="left:141px;top:1481px" width="20" height="16"><path d="M1.5 8L7.5 13.5L18.5 2" fill="none" stroke="#c8c8c8" stroke-width="3.4"/></svg>
<svg style="left:185px;top:1477px" width="22" height="22"><circle cx="11" cy="11" r="9" fill="none" stroke="#c8c8c8" stroke-width="2.6"/><path d="M4.5 17.5L17.5 4.5" stroke="#c8c8c8" stroke-width="2.6"/></svg>
<div class="a" style="left:225px;top:1472px;width:1px;height:34px;background:#505355;"></div>
<div class="a" style="left:327.7px;top:1472px;width:1px;height:34px;background:#505355;"></div>
<div class="a" style="left:430px;top:1472px;width:1px;height:34px;background:#505355;"></div>
<div class="a" style="left:669px;top:1472px;width:1px;height:34px;background:#505355;"></div>
<svg style="left:240px;top:1476px" width="28" height="26"><rect x="6.6" y="1.7" width="3.9" height="16" fill="#b8b8b8"/><path d="M1.6 16H15L8.5 23Z" fill="#b8b8b8"/><text x="20.2" y="10.6" font-family="Liberation Sans" font-weight="bold" font-size="12.5" fill="#b8b8b8" text-anchor="middle">a</text><text x="20.2" y="23" font-family="Liberation Sans" font-weight="bold" font-size="12.5" fill="#b8b8b8" text-anchor="middle">z</text></svg>
<svg style="left:285px;top:1476px" width="28" height="26"><rect x="6.8" y="1.7" width="3.9" height="16" fill="#b8b8b8"/><path d="M1.8 16H15.7L8.7 23Z" fill="#b8b8b8"/><rect x="14.1" y="2" width="11.9" height="3.6" fill="#b8b8b8"/><rect x="17.6" y="9" width="8.4" height="3.6" fill="#b8b8b8"/><rect x="21" y="16" width="5" height="3.6" fill="#b8b8b8"/></svg>
<svg style="left:345.8px;top:1475.8px" width="22" height="26"><rect x="0" y="0" width="21.2" height="4.2" fill="#b8b8b8"/><rect x="0" y="20.9" width="21.2" height="4.2" fill="#b8b8b8"/><path d="M4.7 11.2L10.6 5.4L16.6 11.2Z M4.7 14.2L10.6 19.7L16.6 14.2Z" fill="#b8b8b8"/></svg>
<svg style="left:391px;top:1477.7px" width="22" height="22"><rect x="0" y="9.3" width="20.9" height="3.2" fill="#b8b8b8"/><path d="M4.6 0H16.6L10.6 6.2Z M4.6 21.3H16.6L10.6 15.1Z" fill="#b8b8b8"/></svg>
<svg style="left:450.8px;top:1478px" width="17" height="21"><rect x="6.4" y="3" width="4" height="17.6" fill="#5c5e61"/><path d="M1.5 9.5L8.4 2.2L15.3 9.5" fill="none" stroke="#5c5e61" stroke-width="3.8"/></svg>
<svg style="left:495.7px;top:1478px" width="17" height="21"><rect x="6.6" y="0" width="4" height="17.6" fill="#5c5e61"/><path d="M1.7 11.1L8.6 18.4L15.5 11.1" fill="none" stroke="#5c5e61" stroke-width="3.8"/></svg>
<svg style="left:539px;top:1478px" width="22" height="22"><path d="M2 3.5V19H18" fill="none" stroke="#b8b8b8" stroke-width="4"/><path d="M19.5 2L10 11.5" stroke="#b8b8b8" stroke-width="3.6"/><path d="M6.5 5V15.5H17L11.5 10Z" fill="#b8b8b8"/></svg>
<svg style="left:582.5px;top:1476px" width="30" height="30"><circle cx="12.2" cy="12.3" r="10.6" fill="none" stroke="#b8b8b8" stroke-width="3"/><path d="M11 5.5V12.3L15.6 16.5" fill="none" stroke="#b8b8b8" stroke-width="2.8"/><circle cx="23" cy="25" r="5.6" fill="#3d3e41"/><path d="M18.5 22.6H27.5L23 27.7Z" fill="#d0d0d0"/></svg>
<svg style="left:629.4px;top:1478px" width="22" height="22"><path d="M2 3.5V19H18" fill="none" stroke="#b8b8b8" stroke-width="4"/><path d="M7 14L16.5 4.5" stroke="#b8b8b8" stroke-width="3.6"/><path d="M10 0H21V11L15.5 5.5Z" fill="#b8b8b8"/></svg>
<svg style="left:686.3px;top:1476.6px" width="22" height="22" viewBox="0 0 24 24"><path d="M9.12 3.90L9.43 0.28L14.57 0.28L14.88 3.90L15.61 4.19L16.30 4.55L16.96 4.97L17.57 5.45L20.86 3.91L23.44 8.37L20.46 10.45L20.56 11.22L20.60 12.00L20.56 12.78L20.46 13.55L23.44 15.63L20.86 20.09L17.57 18.55L16.96 19.03L16.30 19.45L15.61 19.81L14.88 20.10L14.57 23.72L9.43 23.72L9.12 20.10L8.39 19.81L7.70 19.45L7.04 19.03L6.43 18.55L3.14 20.09L0.56 15.63L3.54 13.55L3.44 12.78L3.40 12.00L3.44 11.22L3.54 10.45L0.56 8.37L3.14 3.91L6.43 5.45L7.04 4.97L7.70 4.55L8.39 4.19Z M12 7.20A4.8 4.8 0 1 0 12 16.80A4.8 4.8 0 1 0 12 7.20Z" fill="#b8b8b8" fill-rule="evenodd" stroke="#b8b8b8" stroke-width="1" stroke-linejoin="round"/></svg>
<svg style="left:700.5px;top:1496px" width="15" height="10"><circle cx="7.5" cy="4" r="6.5" fill="#3d3e41"/><path d="M2.3 2.6H12.5L7.4 8Z" fill="#d0d0d0"/></svg>
<svg style="left:734.00px;top:1478.00px;" width="22" height="18"><use href="#check" width="22" height="18"/></svg>
<div class="t" style="left:763.40px;top:1476.13px;font-size:22.9px;line-height:27.48px;color:#bbbbbb;font-weight:normal;">Tests passed: 1</div>
<div class="t" style="left:763.40px;top:1476.13px;font-size:22.9px;line-height:27.48px;color:#7f8284;font-weight:normal;"><span style="visibility:hidden">Tests passed: 1</span> of 1 test – 6sec 535ms</div>
<svg style="left:86px;top:1521px" width="26" height="26"><defs><mask id="wrm"><rect x="0" y="0" width="26" height="26" fill="#fff"/><path d="M15.9 6.9L24.4 -1.6L27.6 1.6L19.1 10.1Z" fill="#000"/><circle cx="17.5" cy="8.5" r="2.6" fill="#000"/></mask></defs><path d="M3 23.5L15 11.5" stroke="#b8b8b8" stroke-width="5.2"/><circle cx="17.5" cy="8.5" r="7.6" fill="#b8b8b8" mask="url(#wrm)"/></svg>
<div class="a" style="left:81.6px;top:1561.5px;width:34.7px;height:1.3px;background:#515356;"></div>
<div class="a" style="left:90px;top:1582px;width:18px;height:18px;background:#58595b;"></div>
<div class="a" style="left:81.6px;top:1619.5px;width:34.7px;height:1.3px;background:#515356;"></div>
<svg style="left:88.5px;top:1639.5px" width="22" height="19"><rect x="0" y="0.5" width="12.5" height="8.5" fill="#b8b8b8"/><rect x="14" y="0.5" width="7" height="8.5" fill="#b8b8b8"/><rect x="0" y="10.5" width="21" height="8.5" fill="#b8b8b8"/></svg>
<div class="a" style="left:81.6px;top:1676.5px;width:34.7px;height:1.3px;background:#515356;"></div>
<svg style="left:86px;top:1692px" width="26" height="28"><path d="M15.5 1L24.5 10L18 13.5L13.5 23L11.5 17L4 12L12.5 8Z" fill="#b8b8b8"/><path d="M10 15L1 25" stroke="#b8b8b8" stroke-width="2.6"/></svg>
<div class="a" style="left:125px;top:1514px;width:601px;height:415px;background:#3d3e41;"></div>
<div class="a" style="left:125.6px;top:1515.3px;width:599px;height:33.6px;background:#0d2a40;"></div>
<svg style="left:135.60px;top:1524.70px;" width="16" height="10"><use href="#chevd" width="16" height="10"/></svg>
<svg style="left:169.20px;top:1522.70px;" width="22" height="18"><use href="#check" width="22" height="18"/></svg>
<div class="t" style="left:198.20px;top:1520.67px;font-size:22.75px;line-height:27.30px;color:#bbbbbb;font-weight:normal;">Test Results</div>
<div class="t" style="left:605.00px;top:1521.13px;font-size:21.2px;line-height:25.44px;color:#d0d0d0;font-weight:normal;">6sec 535ms</div>
<svg style="left:166.90px;top:1559.70px;" width="16" height="10"><use href="#chevd" width="16" height="10"/></svg>
<svg style="left:200.50px;top:1557.70px;" width="22" height="18"><use href="#check" width="22" height="18"/></svg>
<div class="t" style="left:229.50px;top:1555.67px;font-size:22.75px;line-height:27.30px;color:#bbbbbb;font-weight:normal;">GameLogic.test.ets</div>
<div class="t" style="left:605.00px;top:1556.13px;font-size:21.2px;line-height:25.44px;color:#8a8d8f;font-weight:normal;">6sec 535ms</div>
<svg style="left:198.20px;top:1594.70px;" width="16" height="10"><use href="#chevd" width="16" height="10"/></svg>
<svg style="left:231.80px;top:1592.70px;" width="22" height="18"><use href="#check" width="22" height="18"/></svg>
<div class="t" style="left:260.80px;top:1590.67px;font-size:22.75px;line-height:27.30px;color:#bbbbbb;font-weight:normal;">GameLogicTest</div>
<div class="t" style="left:605.00px;top:1591.13px;font-size:21.2px;line-height:25.44px;color:#8a8d8f;font-weight:normal;">6sec 535ms</div>
<svg style="left:263.10px;top:1627.70px;" width="22" height="18"><use href="#check" width="22" height="18"/></svg>
<div class="t" style="left:292.10px;top:1625.67px;font-size:22.75px;line-height:27.30px;color:#bbbbbb;font-weight:normal;">testMichellThreeHitLogic</div>
<div class="t" style="left:605.00px;top:1626.13px;font-size:21.2px;line-height:25.44px;color:#8a8d8f;font-weight:normal;">2sec 572ms</div>
<div class="a" style="left:725px;top:1514px;width:1px;height:415px;background:#2e2f31;"></div>
<svg style="left:425px;top:1652px" width="22" height="32"><path d="M1.5 1.5V25L7 19.5L11 29L15 27.3L11 18H18.5Z" fill="#000" stroke="#fff" stroke-width="1.8" stroke-linejoin="round"/></svg>
<div class="a" style="left:726px;top:1514px;width:2329px;height:415px;background:#2b2b2b;"></div>
<div class="m" style="left:748px;top:1516.77px;line-height:38px;color:#bcbcbc;font-size:22.638px">Testing started at 20:35 ...</div>
<div class="m" style="left:748px;top:1555.07px;line-height:38px;color:#bcbcbc;font-size:22.638px">$ hdc uninstall com.qky.test1</div>
<div class="m" style="left:748px;top:1593.37px;line-height:38px;color:#bcbcbc;font-size:22.638px">$ hdc shell mkdir data/local/tmp/c6d6fd67f8f84aa58c064d4d7d1cb821</div>
<div class="m" style="left:748px;top:1631.67px;line-height:38px;color:#bcbcbc;font-size:22.638px">$ hdc file send /Users/qiukaiyu/Documents/Q1/entry/build/default/outputs/default/entry-default-signed.hap "data/local/tmp/c6d6fd67f8f84aa58c064d4d7d1cb821"</div>
<div class="m" style="left:748px;top:1669.97px;line-height:38px;color:#bcbcbc;font-size:22.638px">$ hdc file send /Users/qiukaiyu/Documents/Q1/entry/build/default/outputs/ohosTest/entry-ohosTest-signed.hap "data/local/tmp/c6d6fd67f8f84aa58c064d4d7d1cb821"</div>
<div class="m" style="left:748px;top:1708.27px;line-height:38px;color:#bcbcbc;font-size:22.638px">$ hdc shell bm install -p data/local/tmp/c6d6fd67f8f84aa58c064d4d7d1cb821</div>
<div class="m" style="left:748px;top:1746.57px;line-height:38px;color:#bcbcbc;font-size:22.638px">$ hdc shell rm -rf data/local/tmp/c6d6fd67f8f84aa58c064d4d7d1cb821</div>
<div class="m" style="left:748px;top:1784.87px;line-height:38px;color:#bcbcbc;font-size:22.638px">Running tests.</div>
<div class="m" style="left:748px;top:1823.17px;line-height:38px;color:#bcbcbc;font-size:22.638px"></div>
<div class="m" style="left:748px;top:1861.47px;line-height:38px;color:#bcbcbc;font-size:22.638px">$ hdc shell aa test -b com.qky.test1 -m entry_test -s unittest OpenHarmonyTestRunner -s class GameLogicTest -s timeout 15000</div>
<div class="a" style="left:3055px;top:1514px;width:25px;height:415px;background:#2d2f31;"></div>
<div class="a" style="left:3060px;top:1519px;width:15px;height:281px;background:#444648;border-radius:7.5px"></div>
<div class="a" style="left:3080px;top:1514px;width:51px;height:415px;background:#3d3e41;"></div>
<div class="a" style="left:3080px;top:1514px;width:1px;height:415px;background:#2e2f31;"></div>
<svg style="left:3097px;top:1528px" width="16" height="22"><path d="M8 22V2M1 9L8 2L15 9" fill="none" stroke="#5c5e61" stroke-width="2.4"/></svg>
<svg style="left:3097px;top:1573px" width="16" height="22"><path d="M8 0V20M1 13L8 20L15 13" fill="none" stroke="#5c5e61" stroke-width="2.4"/></svg>
<svg style="left:3095px;top:1618px" width="22" height="24"><path d="M1 1.5H22M1 8.5H15A6 6 0 0 1 15 20.5H8M1 15.5H4M1 21H4" fill="none" stroke="#b8b8b8" stroke-width="2.6"/><path d="M11 16L6 20.5L11 25Z" fill="#b8b8b8"/></svg>
<svg style="left:3095px;top:1662px" width="22" height="24"><path d="M1 4H8M1 11H8M1 22H22M15 0V17M9 11L15 17L21 11" fill="none" stroke="#b8b8b8" stroke-width="2.6"/></svg>
<svg style="left:3093px;top:1708px" width="25" height="24"><rect x="5" y="0" width="15" height="6" fill="#b8b8b8"/><rect x="0" y="8" width="25" height="11" rx="2" fill="#b8b8b8"/><rect x="6" y="15" width="13" height="9" fill="#3d3e41" stroke="#b8b8b8" stroke-width="2"/></svg>
<svg style="left:3097px;top:1752px" width="18" height="24"><rect x="0" y="3" width="18" height="3" fill="#b8b8b8"/><rect x="6" y="0" width="6" height="3" fill="#b8b8b8"/><path d="M2 8H16L15 24H3Z" fill="#b8b8b8"/></svg>
<div class="a" style="left:36px;top:1923px;width:3126px;height:6px;background:#3b3c3f;"></div>
<div class="a" style="left:36px;top:1923.3px;width:3126px;height:0.8px;background:#2f3032;"></div>
<div class="a" style="left:162px;top:1924.5px;width:95px;height:5px;background:#2e2e30;"></div>
<div class="a" style="left:861px;top:1916.6px;width:1483px;height:40px;background:#2c2e30;border-top:1.5px solid #3d3f41;border-radius:26px 26px 0 0"></div>
<div class="a" style="left:3131px;top:83px;width:31px;height:1846px;background:#3d3e41;"></div>
<div class="a" style="left:3130px;top:83px;width:1px;height:1846px;background:#2e2f31;"></div>
<svg style="left:3138px;top:104px" width="24" height="17"><path d="M1 8.5Q12 -4 23 8.5Q12 21 1 8.5Z" fill="none" stroke="#bbbbbb" stroke-width="2.2"/><circle cx="12" cy="8.5" r="3.5" fill="#bbbbbb"/></svg>
<div class="t" style="left:3138.30px;top:131.6px;width:23.40px;height:84.4px;font-size:19.5px;line-height:23.40px;writing-mode:vertical-rl;text-align:center;color:#bbbbbb">Previewer</div>
<svg style="left:3138px;top:256px" width="23" height="23"><path d="M4.5 1.2H11.5A10.3 10.3 0 0 1 11.5 21.8H4.5Q1.2 21.8 1.2 18.5V4.5Q1.2 1.2 4.5 1.2Z" fill="none" stroke="#c0c0c0" stroke-width="2.2"/><text x="10.5" y="16.5" font-family="Liberation Sans" font-weight="bold" font-size="13.5" fill="#c8c8c8" text-anchor="middle">G</text></svg>
<div class="t" style="left:3138.30px;top:288px;width:23.40px;height:96.5px;font-size:19.5px;line-height:23.40px;writing-mode:vertical-rl;text-align:center;color:#bbbbbb">CodeGenie</div>
<svg style="left:3139px;top:421px" width="24" height="26"><path d="M1 19L4 15.5V10Q4 3.5 11 3.5Q18 3.5 18 10V15.5L21 19Z" fill="#bbbbbb"/><path d="M8.5 21.5H13.5L11 24Z" fill="#bbbbbb"/><circle cx="18.5" cy="4.5" r="4.3" fill="#e04f4f"/></svg>
<div class="t" style="left:3138.30px;top:451.6px;width:23.40px;height:106.69999999999993px;font-size:19.5px;line-height:23.40px;writing-mode:vertical-rl;text-align:center;color:#bbbbbb">Notifications</div>
<svg style="left:3138px;top:600px" width="24" height="24"><circle cx="12" cy="12" r="10" fill="none" stroke="#bbbbbb" stroke-width="1.8"/><rect x="7" y="7" width="4" height="4" fill="#bbbbbb"/><rect x="13" y="7" width="4" height="4" fill="#bbbbbb"/><rect x="7" y="13" width="4" height="4" fill="#bbbbbb"/><rect x="13" y="13" width="4" height="4" fill="#bbbbbb"/><circle cx="12" cy="2" r="2" fill="#bbbbbb"/><circle cx="2.5" cy="16.5" r="2" fill="#bbbbbb"/><circle cx="21.5" cy="16.5" r="2" fill="#bbbbbb"/></svg>
<div class="t" style="left:3138.30px;top:631.6px;width:23.40px;height:108.39999999999998px;font-size:19.5px;line-height:23.40px;writing-mode:vertical-rl;text-align:center;color:#bbbbbb">AppAnalyzer</div>
<svg style="left:3138px;top:783px" width="25" height="26"><circle cx="12.5" cy="13" r="11" fill="none" stroke="#bbbbbb" stroke-width="2"/><path d="M2 16Q6 6 11 11Q16 17 23 9" fill="none" stroke="#bbbbbb" stroke-width="2"/></svg>
<div class="t" style="left:3138.30px;top:815.7px;width:23.40px;height:153.0999999999999px;font-size:19.5px;line-height:23.40px;writing-mode:vertical-rl;text-align:center;color:#bbbbbb">Application Agent</div>
<svg style="left:3141px;top:1696px" width="17" height="27"><rect x="1.2" y="1.2" width="14.6" height="24.6" rx="3" fill="none" stroke="#dddddd" stroke-width="2.4"/><rect x="6" y="20" width="5" height="2" fill="#dddddd"/></svg>
<div class="t" style="left:3138.30px;top:1731px;width:23.40px;height:169px;font-size:19.5px;line-height:23.40px;writing-mode:vertical-rl;text-align:center;color:#bbbbbb">Device File Browser</div>
<svg style="left:1739.5px;top:46.5px" width="25" height="23"><circle cx="12.5" cy="11.5" r="8" fill="none" stroke="#b8b8b8" stroke-width="2.6"/><circle cx="12.5" cy="11.5" r="3.3" fill="#b8b8b8"/><path d="M12.5 0V3.5M12.5 19.5V23M1 11.5H4.5M20.5 11.5H24" stroke="#b8b8b8" stroke-width="2.6"/></svg>
<div class="a" style="left:1785.5px;top:39.5px;width:262px;height:37px;border:1.5px solid #5b5e60;border-radius:5px"></div>
<svg style="left:1800.00px;top:44.00px;" width="28" height="28"><use href="#jsic" width="28" height="28"/></svg>
<div class="t" style="left:1835.80px;top:47.23px;font-size:19.3px;line-height:23.16px;color:#c8c8c8;font-weight:normal;">GameLogic.test.ets</div>
<svg style="left:2016px;top:53px" width="15" height="9"><path d="M0 0H15L7.5 9Z" fill="#bbbbbb"/></svg>
<div class="a" style="left:2063.5px;top:39.5px;width:434px;height:37px;border:1.5px solid #5b5e60;border-radius:5px"></div>
<svg style="left:2083.7px;top:45px" width="20" height="28"><rect x="1.6" y="1.6" width="14" height="24" rx="3.5" fill="none" stroke="#eeeeee" stroke-width="3"/><rect x="6" y="19.5" width="5" height="2.2" fill="#eeeeee"/><circle cx="17" cy="24" r="3.3" fill="#1fc41f"/></svg>
<div class="t" style="left:2114.00px;top:47.23px;font-size:19.3px;line-height:23.16px;color:#c8c8c8;font-weight:normal;">HUAWEI Mate X5[22M0224A18001691]</div>
<svg style="left:2466.5px;top:53px" width="15" height="9"><path d="M0 0H15L7.5 9Z" fill="#bbbbbb"/></svg>
<svg style="left:2520px;top:48px" width="19" height="21"><path d="M0 0L19 10.5L0 21Z" fill="#4aa14e"/></svg>
<svg style="left:2562.5px;top:46px" width="22" height="25"><path d="M6.5 1L10 5M15.5 1L12 5" stroke="#4aa14e" stroke-width="2.6"/><rect x="0" y="8.2" width="22" height="2.8" fill="#4aa14e"/><rect x="0" y="13.6" width="22" height="2.8" fill="#4aa14e"/><rect x="0" y="19" width="22" height="2.8" fill="#4aa14e"/><path d="M4.5 9.5Q4.5 4.5 11 4.5Q17.5 4.5 17.5 9.5V17.5Q17.5 24.5 11 24.5Q4.5 24.5 4.5 17.5Z" fill="#4aa14e"/><rect x="7.5" y="10.5" width="7" height="2.4" fill="#3d3e41"/><rect x="7.5" y="15.2" width="7" height="2.4" fill="#3d3e41"/></svg>
<svg style="left:2605.5px;top:47.5px" width="28" height="25"><path d="M0 2.6Q5 0.5 9.5 0.5Q14 0.5 18.5 2.6V8H14.5V4H9.5V20.8L9 21.2Q0 17.5 0 12Z" fill="#b9b9ba"/><path d="M14 9.5L27 17L14 24.6Z" fill="#4aa14e"/></svg>
<div class="a" style="left:2655px;top:49.7px;width:17px;height:17.2px;background:#58595b;"></div>
<div class="a" style="left:2692px;top:42px;width:1px;height:35px;background:#505355;"></div>
<div class="t" style="left:2708.80px;top:47.04px;font-size:19.5px;line-height:23.40px;color:#bbbbbb;font-weight:normal;">Git:</div>
<svg style="left:2760px;top:47px" width="21" height="21"><path d="M20 1L5 16" stroke="#3e95d6" stroke-width="3.2"/><path d="M2 7V19H14Z" fill="#3e95d6"/></svg>
<svg style="left:2804.8px;top:49px" width="23" height="18"><path d="M1.5 9L8 15.5L21.5 2" fill="none" stroke="#4aa14e" stroke-width="3.6"/></svg>
<svg style="left:2849px;top:47px" width="21" height="21"><path d="M1 20L16 5" stroke="#4aa14e" stroke-width="3.2"/><path d="M7 2H19V14Z" fill="#4aa14e"/></svg>
<svg style="left:2893px;top:45px" width="25" height="25"><circle cx="12.5" cy="12.5" r="11" fill="none" stroke="#b8b8b8" stroke-width="2.4"/><path d="M11 5V13L16 16" fill="none" stroke="#b8b8b8" stroke-width="2.4"/></svg>
<svg style="left:2940px;top:46px" width="24" height="24"><path d="M6 7H15A7 7 0 0 1 15 21H7" fill="none" stroke="#b8b8b8" stroke-width="2.8"/><path d="M0 7L8 1V13Z" fill="#b8b8b8"/></svg>
<div class="a" style="left:2979px;top:42px;width:1px;height:35px;background:#505355;"></div>
<svg style="left:2995px;top:46px" width="26" height="24"><path d="M0 0H10L12 4H24V18H0Z" fill="#b8b8b8"/><rect x="12" y="12" width="14" height="12" fill="#3d3e41"/><rect x="14" y="13" width="5" height="4.5" fill="#3e95d6"/><rect x="21" y="13" width="5" height="4.5" fill="#3e95d6"/><rect x="14" y="19.5" width="5" height="4.5" fill="#3e95d6"/><rect x="21" y="19.5" width="5" height="4.5" fill="#3e95d6"/></svg>
<svg style="left:3040.6px;top:46px" width="26" height="25"><circle cx="10" cy="10" r="8" fill="none" stroke="#b8b8b8" stroke-width="3"/><path d="M16 16L24 24" stroke="#b8b8b8" stroke-width="3.4"/></svg>
<svg style="left:3087px;top:46px" width="23" height="23" viewBox="0 0 24 24"><path d="M9.12 3.90L9.43 0.28L14.57 0.28L14.88 3.90L15.61 4.19L16.30 4.55L16.96 4.97L17.57 5.45L20.86 3.91L23.44 8.37L20.46 10.45L20.56 11.22L20.60 12.00L20.56 12.78L20.46 13.55L23.44 15.63L20.86 20.09L17.57 18.55L16.96 19.03L16.30 19.45L15.61 19.81L14.88 20.10L14.57 23.72L9.43 23.72L9.12 20.10L8.39 19.81L7.70 19.45L7.04 19.03L6.43 18.55L3.14 20.09L0.56 15.63L3.54 13.55L3.44 12.78L3.40 12.00L3.44 11.22L3.54 10.45L0.56 8.37L3.14 3.91L6.43 5.45L7.04 4.97L7.70 4.55L8.39 4.19Z M12 7.20A4.8 4.8 0 1 0 12 16.80A4.8 4.8 0 1 0 12 7.20Z" fill="#b8b8b8" fill-rule="evenodd" stroke="#b8b8b8" stroke-width="1" stroke-linejoin="round"/></svg>
<svg style="left:3131px;top:44px" width="27" height="27"><circle cx="13.5" cy="7" r="5.5" fill="none" stroke="#d0d0d0" stroke-width="2.2"/><path d="M1.5 26V22Q1.5 15 13.5 15Q25.5 15 25.5 22V26Z" fill="none" stroke="#d0d0d0" stroke-width="2.2"/></svg>
</div></body></html>
